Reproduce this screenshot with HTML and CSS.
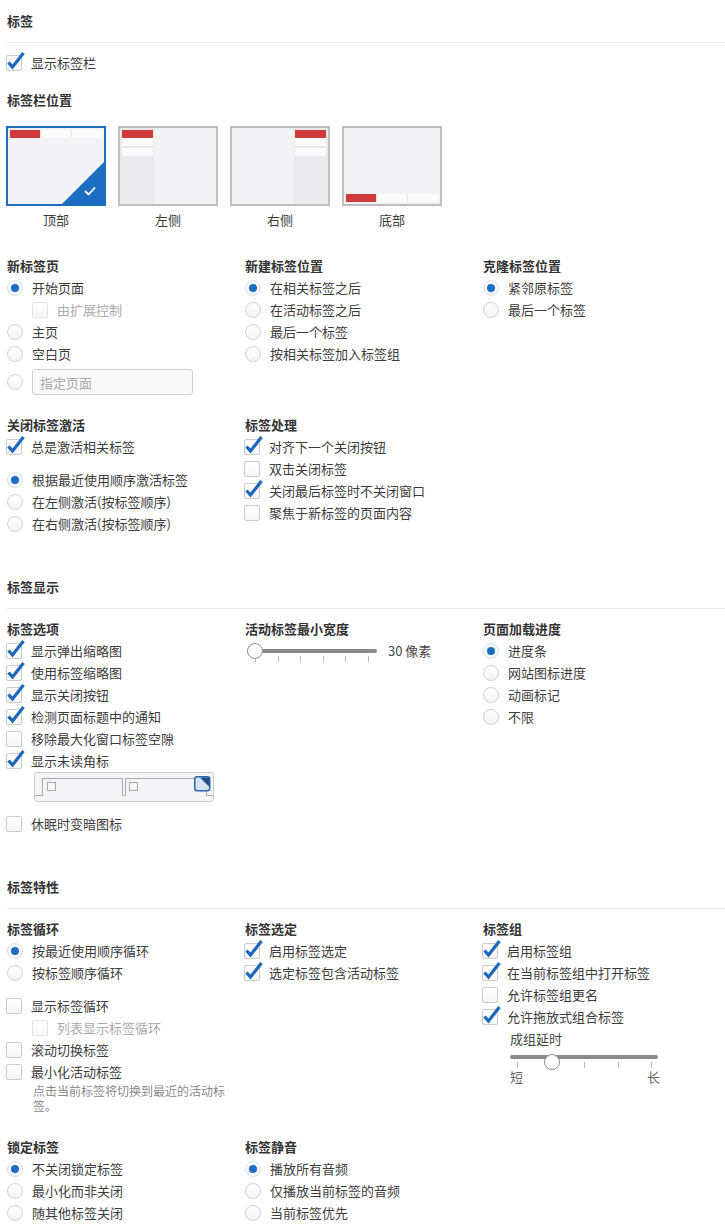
FILE: index.html
```html
<!DOCTYPE html>
<html lang="zh-CN">
<head>
    <meta charset="UTF-8">
    <title>标签设置</title>
    <link rel="stylesheet" href="styles.css">
</head>
<body>
    <div class="section-title first">标签</div>
    <div class="opt after-title"><span class="cb on"><svg viewBox="0 0 16 16"><path d="M2.5 7.5 L6.5 12 L17.5 -2"/></svg></span>显示标签栏</div>

    <div class="group-title pos-title">标签栏位置</div>
    <div class="positions">
        <div class="pos">
            <div class="thumb selected top">
                <div class="bar-h"><span class="red"></span><span></span><span></span></div>
                <span class="corner"><svg viewBox="0 0 12 10"><path d="M1 5 L4.5 8.5 L11 1.5"/></svg></span>
            </div>
            <div class="pos-label">顶部</div>
        </div>
        <div class="pos">
            <div class="thumb left">
                <div class="bar-v"><span class="red"></span><span></span><span></span></div>
            </div>
            <div class="pos-label">左侧</div>
        </div>
        <div class="pos">
            <div class="thumb right">
                <div class="bar-v"><span class="red"></span><span></span><span></span></div>
            </div>
            <div class="pos-label">右侧</div>
        </div>
        <div class="pos">
            <div class="thumb bottom">
                <div class="bar-h"><span class="red"></span><span></span><span></span></div>
            </div>
            <div class="pos-label">底部</div>
        </div>
    </div>

    <div class="grid first-grid">
        <div class="col">
            <div class="group-title">新标签页</div>
            <div class="opt"><span class="rd on"></span>开始页面</div>
            <div class="opt sub disabled"><span class="cb"></span>由扩展控制</div>
            <div class="opt"><span class="rd"></span>主页</div>
            <div class="opt"><span class="rd"></span>空白页</div>
            <div class="opt input-row"><span class="rd"></span><input type="text" placeholder="指定页面"></div>
        </div>
        <div class="col">
            <div class="group-title">新建标签位置</div>
            <div class="opt"><span class="rd on"></span>在相关标签之后</div>
            <div class="opt"><span class="rd"></span>在活动标签之后</div>
            <div class="opt"><span class="rd"></span>最后一个标签</div>
            <div class="opt"><span class="rd"></span>按相关标签加入标签组</div>
        </div>
        <div class="col">
            <div class="group-title">克隆标签位置</div>
            <div class="opt"><span class="rd on"></span>紧邻原标签</div>
            <div class="opt"><span class="rd"></span>最后一个标签</div>
        </div>

        <div class="col">
            <div class="group-title">关闭标签激活</div>
            <div class="opt"><span class="cb on"><svg viewBox="0 0 16 16"><path d="M2.5 7.5 L6.5 12 L17.5 -2"/></svg></span>总是激活相关标签</div>
            <div class="opt spaced"><span class="rd on"></span>根据最近使用顺序激活标签</div>
            <div class="opt"><span class="rd"></span>在左侧激活(按标签顺序)</div>
            <div class="opt"><span class="rd"></span>在右侧激活(按标签顺序)</div>
        </div>
        <div class="col">
            <div class="group-title">标签处理</div>
            <div class="opt"><span class="cb on"><svg viewBox="0 0 16 16"><path d="M2.5 7.5 L6.5 12 L17.5 -2"/></svg></span>对齐下一个关闭按钮</div>
            <div class="opt"><span class="cb"></span>双击关闭标签</div>
            <div class="opt"><span class="cb on"><svg viewBox="0 0 16 16"><path d="M2.5 7.5 L6.5 12 L17.5 -2"/></svg></span>关闭最后标签时不关闭窗口</div>
            <div class="opt"><span class="cb"></span>聚焦于新标签的页面内容</div>
        </div>
    </div>

    <div class="section-title">标签显示</div>
    <div class="grid">
        <div class="col">
            <div class="group-title">标签选项</div>
            <div class="opt"><span class="cb on"><svg viewBox="0 0 16 16"><path d="M2.5 7.5 L6.5 12 L17.5 -2"/></svg></span>显示弹出缩略图</div>
            <div class="opt"><span class="cb on"><svg viewBox="0 0 16 16"><path d="M2.5 7.5 L6.5 12 L17.5 -2"/></svg></span>使用标签缩略图</div>
            <div class="opt"><span class="cb on"><svg viewBox="0 0 16 16"><path d="M2.5 7.5 L6.5 12 L17.5 -2"/></svg></span>显示关闭按钮</div>
            <div class="opt"><span class="cb on"><svg viewBox="0 0 16 16"><path d="M2.5 7.5 L6.5 12 L17.5 -2"/></svg></span>检测页面标题中的通知</div>
            <div class="opt"><span class="cb"></span>移除最大化窗口标签空隙</div>
            <div class="opt"><span class="cb on"><svg viewBox="0 0 16 16"><path d="M2.5 7.5 L6.5 12 L17.5 -2"/></svg></span>显示未读角标</div>
            <svg class="badge-demo" width="180" height="30" viewBox="0 0 180 30">
                <rect x="0.5" y="0.5" width="179" height="29" rx="3" fill="#f4f4f6" stroke="#cacaca"/>
                <path d="M1 23.5 H8.5 V6.5 H88.5 V23.5 H91.5 V6.5 H172.5 V23.5 H179" fill="none" stroke="#aaaaaa"/>
                <rect x="13.5" y="10.5" width="8" height="8" fill="#f7f7f7" stroke="#aaaaaa"/>
                <rect x="95.5" y="10.5" width="8" height="8" fill="#f7f7f7" stroke="#aaaaaa"/>
                <rect x="160.75" y="4.75" width="15" height="14" rx="2.5" fill="#d3e3f4" stroke="#2a67a8" stroke-width="1.5"/>
                <path d="M166 5.5 H175 V14.5 Z" fill="#1d4f8a"/>
            </svg>
            <div class="opt spaced"><span class="cb"></span>休眠时变暗图标</div>
        </div>
        <div class="col">
            <div class="group-title">活动标签最小宽度</div>
            <div class="opt slider-row">
                <div class="slider w130">
                    <div class="track"></div>
                    <span class="knob" style="left: 0px"></span>
                    <div class="ticks"><i></i><i></i><i></i><i></i><i></i><i></i></div>
                </div>
                <span class="slider-val">30 像素</span>
            </div>
        </div>
        <div class="col">
            <div class="group-title">页面加载进度</div>
            <div class="opt"><span class="rd on"></span>进度条</div>
            <div class="opt"><span class="rd"></span>网站图标进度</div>
            <div class="opt"><span class="rd"></span>动画标记</div>
            <div class="opt"><span class="rd"></span>不限</div>
        </div>
    </div>

    <div class="section-title">标签特性</div>
    <div class="grid">
        <div class="col">
            <div class="group-title">标签循环</div>
            <div class="opt"><span class="rd on"></span>按最近使用顺序循环</div>
            <div class="opt"><span class="rd"></span>按标签顺序循环</div>
            <div class="opt spaced"><span class="cb"></span>显示标签循环</div>
            <div class="opt sub disabled"><span class="cb"></span>列表显示标签循环</div>
            <div class="opt"><span class="cb"></span>滚动切换标签</div>
            <div class="opt"><span class="cb"></span>最小化活动标签</div>
            <div class="note">点击当前标签将切换到最近的活动标签。</div>
        </div>
        <div class="col">
            <div class="group-title">标签选定</div>
            <div class="opt"><span class="cb on"><svg viewBox="0 0 16 16"><path d="M2.5 7.5 L6.5 12 L17.5 -2"/></svg></span>启用标签选定</div>
            <div class="opt"><span class="cb on"><svg viewBox="0 0 16 16"><path d="M2.5 7.5 L6.5 12 L17.5 -2"/></svg></span>选定标签包含活动标签</div>
        </div>
        <div class="col">
            <div class="group-title">标签组</div>
            <div class="opt"><span class="cb on"><svg viewBox="0 0 16 16"><path d="M2.5 7.5 L6.5 12 L17.5 -2"/></svg></span>启用标签组</div>
            <div class="opt"><span class="cb on"><svg viewBox="0 0 16 16"><path d="M2.5 7.5 L6.5 12 L17.5 -2"/></svg></span>在当前标签组中打开标签</div>
            <div class="opt"><span class="cb"></span>允许标签组更名</div>
            <div class="opt"><span class="cb on"><svg viewBox="0 0 16 16"><path d="M2.5 7.5 L6.5 12 L17.5 -2"/></svg></span>允许拖放式组合标签</div>
            <div class="delay">
                <div class="delay-label">成组延时</div>
                <div class="slider w148">
                    <div class="track"></div>
                    <span class="knob" style="left: 34px"></span>
                    <div class="ticks"><i></i><i></i><i></i><i></i><i></i></div>
                </div>
                <div class="range-labels"><span>短</span><span>长</span></div>
            </div>
        </div>

        <div class="col lower">
            <div class="group-title">锁定标签</div>
            <div class="opt"><span class="rd on"></span>不关闭锁定标签</div>
            <div class="opt"><span class="rd"></span>最小化而非关闭</div>
            <div class="opt"><span class="rd"></span>随其他标签关闭</div>
        </div>
        <div class="col lower">
            <div class="group-title">标签静音</div>
            <div class="opt"><span class="rd on"></span>播放所有音频</div>
            <div class="opt"><span class="rd"></span>仅播放当前标签的音频</div>
            <div class="opt"><span class="rd"></span>当前标签优先</div>
        </div>
    </div>
</body>
</html>
```

FILE: styles.css
```css
* {
    margin: 0;
    padding: 0;
    box-sizing: border-box;
}
body {
    width: 725px;
    padding: 10px 0 40px 7px;
    background: #ffffff;
    color: #3c3c3c;
    font-family: "Noto Sans CJK SC", "Noto Sans", sans-serif;
    font-size: 13px;
    line-height: 22px;
}
.section-title {
    margin-top: 41px;
    padding-bottom: 10px;
    border-bottom: 1px solid #e8e8e8;
    font-weight: 700;
    color: #333;
}
.section-title.first {
    margin-top: 0;
}
.group-title {
    font-weight: 700;
    color: #333;
    height: 22px;
}
.after-title {
    margin-top: 9px;
}
.pos-title {
    margin-top: 15px;
}

/* tab bar position thumbnails */
.positions {
    display: flex;
    gap: 12px;
    margin-top: 15px;
    margin-left: -1px;
}
.pos {
    width: 100px;
}
.thumb {
    position: relative;
    display: flex;
    width: 100px;
    height: 80px;
    border: 2px solid #bdbdbd;
    background: #f3f3f5;
    overflow: hidden;
}
.thumb.selected {
    border-color: #1b6ec2;
}
.thumb.top {
    flex-direction: column;
}
.thumb.bottom {
    flex-direction: column;
    justify-content: flex-end;
}
.thumb.right {
    flex-direction: row-reverse;
}
.bar-h {
    display: flex;
    gap: 1px;
    margin: 2px;
    height: 8px;
    background: #e6e6e8;
}
.bar-h span {
    flex: 1;
    background: #fbfbfb;
}
.bar-h span.red {
    background: #cf3b38;
}
.bar-v {
    display: flex;
    flex-direction: column;
    gap: 2px;
    width: 34px;
    padding: 2px 1px 0 2px;
    background: #ebebed;
}
.thumb.right .bar-v {
    padding: 2px 2px 0 1px;
}
.bar-v span {
    height: 8px;
    background: #fbfbfb;
}
.bar-v span.red {
    margin-bottom: -2px;
    background: #cf3b38;
}
.corner {
    position: absolute;
    right: 0;
    bottom: 0;
    width: 42px;
    height: 42px;
    background: #1b6ec2;
    clip-path: polygon(100% 0, 100% 100%, 0 100%);
}
.corner svg {
    position: absolute;
    right: 8px;
    bottom: 8px;
    width: 12px;
    height: 10px;
    fill: none;
    stroke: #ffffff;
    stroke-width: 1.8;
}
.pos-label {
    margin-top: 3px;
    text-align: center;
}

/* option columns */
.grid {
    display: grid;
    grid-template-columns: 238px 238px 238px;
    row-gap: 19px;
    margin-top: 9px;
}
.grid.first-grid {
    margin-top: 24px;
}
.col.lower {
    margin-top: 4px;
}
.opt {
    display: flex;
    align-items: center;
    gap: 9px;
    height: 22px;
    white-space: nowrap;
}
.opt.spaced {
    margin-top: 11px;
}
.opt.sub {
    padding-left: 26px;
}
.opt.disabled {
    color: #ababab;
}
.cb {
    position: relative;
    flex: none;
    width: 16px;
    height: 16px;
    margin-left: -1px;
    border: 1px solid #cbcbcb;
    border-radius: 2px;
    background: linear-gradient(#ffffff, #f6f6f6);
}
.opt.disabled .cb {
    border-color: #e3e3e3;
}
.cb svg {
    position: absolute;
    left: -1px;
    top: -1px;
    width: 16px;
    height: 16px;
    overflow: visible;
    fill: none;
    stroke: #1f68b9;
    stroke-width: 3.2;
    stroke-linejoin: miter;
}
.rd {
    position: relative;
    flex: none;
    width: 16px;
    height: 16px;
    border: 1px solid #d2d2d2;
    border-radius: 50%;
    background: linear-gradient(#ffffff, #f4f4f4);
}
.rd.on {
    border-color: #d6e1ee;
}
.rd.on::after {
    content: "";
    position: absolute;
    left: 3px;
    top: 3px;
    width: 8px;
    height: 8px;
    border-radius: 50%;
    background: #1b6ec2;
}
.input-row {
    height: 26px;
    margin-top: 4px;
}
.input-row input {
    width: 161px;
    height: 26px;
    padding: 0 7px;
    border: 1px solid #cfcfcf;
    border-radius: 3px;
    background: #fafafa;
    font-family: inherit;
    font-size: 13px;
    color: #333;
}
.input-row input::placeholder {
    color: #a8a8a8;
}
.badge-demo {
    display: block;
    margin-left: 27px;
}
.note {
    width: 200px;
    margin-left: 26px;
    font-size: 12px;
    line-height: 15px;
    color: #8a8a8a;
}

/* sliders */
.slider {
    position: relative;
    height: 22px;
}
.slider.w130 {
    width: 130px;
    margin-left: 2px;
}
.slider.w148 {
    width: 148px;
}
.track {
    margin-top: 9px;
    height: 4px;
    border-radius: 2px;
    background: #8a8a8a;
}
.knob {
    position: absolute;
    top: 3px;
    width: 16px;
    height: 16px;
    border: 1px solid #8f8f8f;
    border-radius: 50%;
    background: #ffffff;
}
.ticks {
    display: flex;
    justify-content: space-between;
    padding: 0 8px;
    margin-top: 3px;
}
.slider.w148 .ticks {
    padding: 0 6px 0 7px;
}
.ticks i {
    width: 1px;
    height: 6px;
    background: #b8b8b8;
}
.slider-row {
    gap: 11px;
}
.slider-val {
    color: #444;
}
.delay {
    margin-left: 27px;
    width: 150px;
}
.delay-label {
    height: 22px;
    color: #444;
}
.delay .slider {
    height: 18px;
}
.delay .track {
    margin-top: 5px;
}
.delay .knob {
    top: -1px;
}
.range-labels {
    display: flex;
    justify-content: space-between;
    width: 150px;
    margin-top: -4px;
    line-height: 16px;
    color: #666;
}
```
